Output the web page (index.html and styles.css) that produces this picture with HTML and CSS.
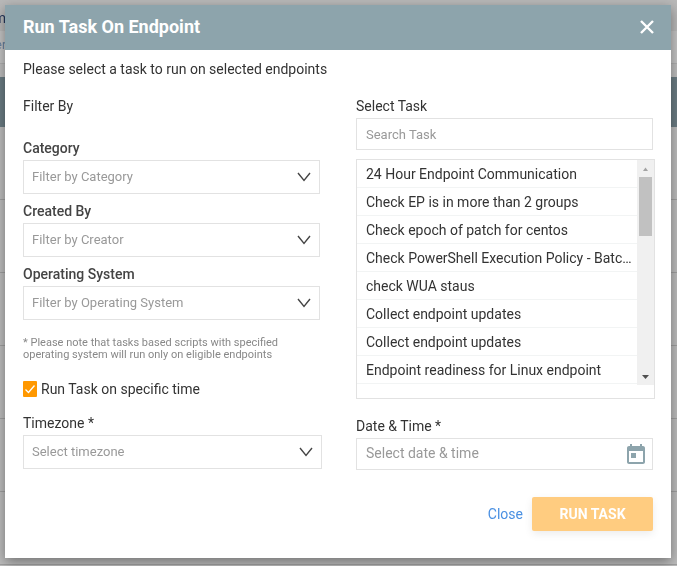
FILE: index.html
```html
<!DOCTYPE html>
<html lang="en">
<head>
    <meta charset="UTF-8">
    <meta name="viewport" content="width=device-width, initial-scale=1.0">
    <title>Run Task On Endpoint</title>
    <link rel="stylesheet" href="styles.css">
</head>
<body>
    <div class="page" aria-hidden="true">
        <div class="page-top"><span>m</span></div>
        <div class="page-nav"><span>er</span></div>
        <div class="page-head"></div>
        <div class="page-row"></div>
        <div class="page-row"></div>
        <div class="page-row"></div>
        <div class="page-row"></div>
        <div class="page-row"></div>
        <div class="page-row"></div>
    </div>

    <div class="overlay">
        <form class="modal" role="dialog" aria-labelledby="modalTitle">
            <header class="modal-header">
                <h1 id="modalTitle">Run Task On Endpoint</h1>
                <button type="button" class="close-icon" aria-label="Close dialog">
                    <svg width="14" height="14" viewBox="0 0 14 14"><path d="M1 1l12 12M13 1L1 13"/></svg>
                </button>
            </header>

            <div class="modal-body">
                <p class="intro">Please select a task to run on selected endpoints</p>

                <div class="columns">
                    <div class="column">
                        <h2 class="filter-title">Filter By</h2>

                        <div class="field">
                            <label class="strong" for="category">Category</label>
                            <div class="select">
                                <select id="category"><option>Filter by Category</option></select>
                                <svg class="chevron" width="14" height="10" viewBox="0 0 14 10"><path d="M1 1l6 7.5L13 1"/></svg>
                            </div>
                        </div>
                        <div class="field">
                            <label class="strong" for="creator">Created By</label>
                            <div class="select">
                                <select id="creator"><option>Filter by Creator</option></select>
                                <svg class="chevron" width="14" height="10" viewBox="0 0 14 10"><path d="M1 1l6 7.5L13 1"/></svg>
                            </div>
                        </div>
                        <div class="field">
                            <label class="strong" for="os">Operating System</label>
                            <div class="select">
                                <select id="os"><option>Filter by Operating System</option></select>
                                <svg class="chevron" width="14" height="10" viewBox="0 0 14 10"><path d="M1 1l6 7.5L13 1"/></svg>
                            </div>
                        </div>

                        <p class="note">* Please note that tasks based scripts with specified operating system will run only on eligible endpoints</p>

                        <div class="check">
                            <input type="checkbox" id="specificTime" checked>
                            <label for="specificTime">Run Task on specific time</label>
                        </div>

                        <div class="field timezone">
                            <label for="timezone">Timezone *</label>
                            <div class="select">
                                <select id="timezone"><option>Select timezone</option></select>
                                <svg class="chevron" width="14" height="10" viewBox="0 0 14 10"><path d="M1 1l6 7.5L13 1"/></svg>
                            </div>
                        </div>
                    </div>

                    <div class="column">
                        <div class="field">
                            <label for="search">Select Task</label>
                            <input type="text" id="search" placeholder="Search Task">
                        </div>

                        <div class="task-box">
                            <div class="task-scroll">
                                <ul class="task-list">
                                    <li>24 Hour Endpoint Communication</li>
                                    <li>Check EP is in more than 2 groups</li>
                                    <li>Check epoch of patch for centos</li>
                                    <li>Check PowerShell Execution Policy - Batc...</li>
                                    <li>check WUA staus</li>
                                    <li>Collect endpoint updates</li>
                                    <li>Collect endpoint updates</li>
                                    <li>Endpoint readiness for Linux endpoint</li>
                                </ul>
                                <div class="scrollbar">
                                    <svg width="17" height="17" viewBox="0 0 17 17"><path fill="#a3a3a3" d="M6 11l2.500-3.500L11 11z"/></svg>
                                    <div class="thumb"></div>
                                    <svg class="down" width="17" height="17" viewBox="0 0 17 17"><path fill="#505050" d="M5 7h7l-3.500 4z"/></svg>
                                </div>
                            </div>
                        </div>

                        <div class="field">
                            <label for="datetime">Date &amp; Time *</label>
                            <div class="date">
                                <input type="text" id="datetime" placeholder="Select date &amp; time">
                                <svg class="calendar" width="18" height="20" viewBox="0 0 18 20">
                                    <path d="M16 2h-1V0h-2v2H5V0H3v2H2C.9 2 0 2.900 0 4v14c0 1.100.9 2 2 2h14c1.100 0 2-.9 2-2V4c0-1.100-.9-2-2-2zm0 16H2V7h14v11zM4 9h5v5H4z"/>
                                </svg>
                            </div>
                        </div>
                    </div>
                </div>

                <footer class="actions">
                    <button type="button" class="btn-close">Close</button>
                    <button type="submit" class="btn-run">RUN TASK</button>
                </footer>
            </div>
        </form>
    </div>
</body>
</html>
```

FILE: styles.css
```css
* {
    box-sizing: border-box;
}
body {
    margin: 0;
    font-family: Roboto, Arial, sans-serif;
    font-size: 14px;
    line-height: 16px;
    color: #333;
    background-color: #bdbdbd;
}
h1, h2, p, ul {
    margin: 0;
    padding: 0;
    font-weight: 400;
}
button, input, select {
    font-family: inherit;
    margin: 0;
}

/* page behind the dialog */
.page {
    position: fixed;
    inset: 0;
    overflow: hidden;
}
.page-top, .page-nav {
    display: flex;
    align-items: center;
}
.page-top span, .page-nav span {
    display: flex;
    justify-content: flex-end;
    width: 6px;
}
.page-top {
    height: 31px;
    padding-top: 4px;
    background-color: #b9b9b9;
    color: #24375c;
}
.page-nav {
    height: 33px;
    margin-bottom: 13px;
    padding-bottom: 4px;
    background-color: #c4c4c4;
    color: #64809f;
    font-size: 12px;
    border-bottom: 1px solid #b0b0b0;
}
.page-head {
    height: 50px;
    background-color: #6b7c83;
}
.page-row {
    height: 73px;
    border-bottom: 1px solid #a0a0a0;
}

.overlay {
    position: relative;
    padding: 5px 6px 8px 5px;
}
.modal {
    background-color: #fff;
    box-shadow: 0 4px 12px rgba(0, 0, 0, 0.4);
}
.modal-header {
    display: flex;
    align-items: center;
    justify-content: space-between;
    height: 45px;
    padding: 0 17px 2px 18px;
    background-color: #8da4ac;
    color: #fff;
}
.modal-header h1 {
    font-size: 18px;
    line-height: 20px;
    font-weight: 700;
}
.close-icon {
    display: flex;
    padding: 0;
    border: none;
    background: none;
    cursor: pointer;
}
.close-icon path {
    fill: none;
    stroke: #fff;
    stroke-width: 2.4;
}
.modal-body {
    padding: 11px 18px 27px;
}
.intro {
    margin-bottom: 21px;
}
.columns {
    display: grid;
    grid-template-columns: 1fr 1fr;
    gap: 36px;
}
.column {
    min-width: 0;
}
.filter-title {
    margin-bottom: 26px;
    font-size: 14px;
}

.field label {
    display: block;
    margin-bottom: 4px;
}
.field .strong {
    font-weight: 500;
    color: #444;
}
.field + .field {
    margin-top: 9px;
}
.select, .date {
    position: relative;
}
.select select {
    display: block;
    width: 100%;
    height: 34px;
    padding: 0 32px 2px 8px;
    border: 1px solid #e2e2e2;
    border-radius: 0;
    background-color: #fff;
    color: #999;
    font-size: 13px;
    appearance: none;
}
.chevron {
    position: absolute;
    right: 9px;
    top: 12px;
    fill: none;
    stroke: #444;
    stroke-width: 1.4;
    pointer-events: none;
}
.field input {
    display: block;
    width: 100%;
    height: 32px;
    padding: 0 9px;
    border: 1px solid #e2e2e2;
    background-color: #fff;
    color: #333;
    font-size: 13px;
}
.field input::placeholder {
    color: #999;
}
.date input {
    padding: 0 36px 2px 9px;
    font-size: 14px;
}
.calendar {
    position: absolute;
    right: 8px;
    top: 6px;
    fill: #8da4ac;
    pointer-events: none;
}

.note {
    margin: 17px 0 20px;
    padding-right: 32px;
    font-size: 11px;
    line-height: 12px;
    color: #888;
}
.check {
    display: flex;
    align-items: center;
    gap: 4px;
    margin-bottom: 18px;
}
.check input {
    width: 14px;
    height: 16px;
    border-radius: 1px;
    appearance: none;
    background: #ff9800 url("data:image/svg+xml,%3Csvg xmlns='http://www.w3.org/2000/svg' viewBox='0 0 14 16'%3E%3Cpath d='M2.500 8.500l3 3 6-7' fill='none' stroke='white' stroke-width='1.300'/%3E%3C/svg%3E") center no-repeat;
}
.timezone {
    margin-right: -2px;
}

.task-box {
    height: 240px;
    margin: 9px -2px 19px 0;
    border: 1px solid #e2e2e2;
}
.task-scroll {
    display: flex;
    height: 225px;
}
.task-list {
    flex: 1;
    min-width: 0;
    list-style: none;
}
.task-list li {
    height: 28px;
    padding: 0 4px 0 9px;
    border-bottom: 1px solid #f2f4f4;
    line-height: 28px;
    overflow: hidden;
    white-space: nowrap;
    text-overflow: ellipsis;
}
.scrollbar {
    display: flex;
    flex-direction: column;
    width: 17px;
    background-color: #f0f0f0;
}
.thumb {
    height: 59px;
    margin: 0 2px;
    background-color: #c1c1c1;
}
.down {
    margin-top: auto;
}

.actions {
    display: flex;
    justify-content: flex-end;
    align-items: center;
    gap: 9px;
    margin-top: 27px;
}
.btn-close, .btn-run {
    border: none;
    font-size: 14px;
    cursor: pointer;
}
.btn-close {
    padding: 0;
    background: none;
    color: #4a90e2;
}
.btn-run {
    width: 121px;
    height: 34px;
    border-radius: 2px;
    background-color: #ffcc80;
    color: #fff;
    font-weight: 700;
    box-shadow: 0 3px 8px rgba(0, 0, 0, 0.08);
}
```
